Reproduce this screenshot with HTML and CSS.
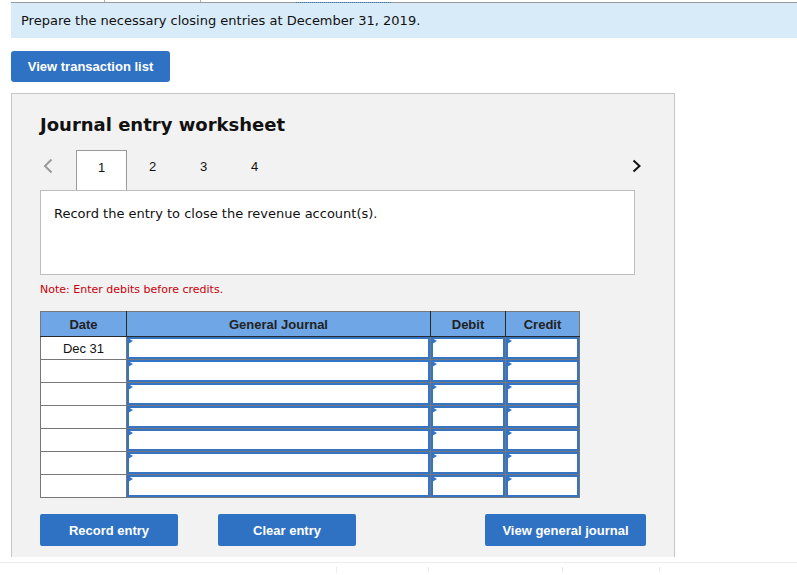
FILE: index.html
```html
<!DOCTYPE html>
<html>
<head>
<meta charset="utf-8">
<link rel="stylesheet" href="styles.css">
</head>
<body>
<div class="page">
  <div class="topbar">
    <span class="seg s1"></span>
    <span class="seg s2"></span>
    <span class="seg s3"></span>
    <span class="seg s4"></span>
    <span class="seg s5"></span>
  </div>
  <div class="banner">Prepare the necessary closing entries at December 31, 2019.</div>
  <button class="btn btn-list">View transaction list</button>
  <div class="panel">
    <h1 class="title">Journal entry worksheet</h1>
    <div class="tabs">
      <span class="arrow arrow-left">
        <svg width="10" height="16" viewBox="0 0 10 16"><path d="M8.5 1.5 L2 8 L8.5 14.5" fill="none" stroke="#9a9a9a" stroke-width="2"/></svg>
      </span>
      <span class="tab active">1</span>
      <span class="tab">2</span>
      <span class="tab">3</span>
      <span class="tab">4</span>
      <span class="arrow arrow-right">
        <svg width="10" height="14" viewBox="0 0 10 14"><path d="M1.5 1.5 L7.5 7 L1.5 12.5" fill="none" stroke="#111" stroke-width="2"/></svg>
      </span>
    </div>
    <div class="entrybox">Record the entry to close the revenue account(s).</div>
    <p class="note">Note: Enter debits before credits.</p>
    <table class="journal">
      <thead>
        <tr>
          <th class="c-date">Date</th>
          <th class="c-gj">General Journal</th>
          <th class="c-deb">Debit</th>
          <th class="c-cre">Credit</th>
        </tr>
      </thead>
      <tbody>
        <tr><td class="date">Dec 31</td><td class="inp"><div class="box"></div></td><td class="inp"><div class="box"></div></td><td class="inp"><div class="box"></div></td></tr>
        <tr><td class="date"></td><td class="inp"><div class="box"></div></td><td class="inp"><div class="box"></div></td><td class="inp"><div class="box"></div></td></tr>
        <tr><td class="date"></td><td class="inp"><div class="box"></div></td><td class="inp"><div class="box"></div></td><td class="inp"><div class="box"></div></td></tr>
        <tr><td class="date"></td><td class="inp"><div class="box"></div></td><td class="inp"><div class="box"></div></td><td class="inp"><div class="box"></div></td></tr>
        <tr><td class="date"></td><td class="inp"><div class="box"></div></td><td class="inp"><div class="box"></div></td><td class="inp"><div class="box"></div></td></tr>
        <tr><td class="date"></td><td class="inp"><div class="box"></div></td><td class="inp"><div class="box"></div></td><td class="inp"><div class="box"></div></td></tr>
        <tr><td class="date"></td><td class="inp"><div class="box"></div></td><td class="inp"><div class="box"></div></td><td class="inp"><div class="box"></div></td></tr>
      </tbody>
    </table>
    <div class="actions">
      <button class="btn btn-act">Record entry</button>
      <button class="btn btn-act btn-clear">Clear entry</button>
      <button class="btn btn-view">View general journal</button>
    </div>
  </div>
  <div class="footline">
    <span class="fseg f1"></span>
    <span class="fseg f2"></span>
    <span class="fseg f3"></span>
    <span class="fseg f4"></span>
  </div>
</div>
</body>
</html>
```
FILE: styles.css
```css
html, body {
  margin: 0;
  padding: 0;
  background: #fff;
}
.page {
  width: 797px;
  font-family: "DejaVu Sans", Verdana, sans-serif;
  color: #111;
}
.topbar {
  display: flex;
  height: 2px;
  margin-left: 11px;
  border-bottom: 1px solid #9a9a9a;
}
.seg { display: block; height: 2px; }
.s1 { width: 93px; border-right: 1px solid #b0b0b0; }
.s2 { width: 95px; border-right: 1px solid #b0b0b0; }
.s3 { width: 95px; }
.s4 { width: 95px; border-bottom: 1px dotted #3a78c8; height: 1px; margin-top: 1px; }
.s5 { flex: 1; }
.banner {
  margin-left: 11px;
  height: 35px;
  background: #d8ebf9;
  padding-left: 10px;
  font-size: 13px;
  line-height: 36px;
  color: #111;
}
.btn {
  display: block;
  border: 0;
  border-radius: 3px;
  background: #2f72c4;
  color: #fff;
  font-family: "Liberation Sans", Arial, sans-serif;
  font-weight: bold;
  font-size: 13px;
  padding: 0;
  cursor: pointer;
}
.btn-list {
  margin: 13px 0 0 11px;
  width: 159px;
  height: 31px;
}
.panel {
  margin: 11px 0 0 11px;
  width: 634px;
  height: 463px;
  background: #f2f2f2;
  border: 1px solid #c6c6c6;
  border-bottom: 0;
  padding-left: 28px;
}
.title {
  margin: 20px 0 0 0;
  font-size: 18px;
  font-weight: bold;
  line-height: 22px;
  color: #111;
}
.tabs {
  display: flex;
  align-items: flex-start;
  width: 602px;
  margin-top: 14px;
  height: 40px;
  font-family: "Liberation Sans", Arial, sans-serif;
  font-size: 13px;
}
.arrow { display: flex; align-items: center; }
.arrow-left { width: 36px; height: 31px; padding-left: 3px; box-sizing: border-box; }
.arrow-right { margin-left: auto; height: 31px; }
.tab {
  width: 51px;
  box-sizing: border-box;
  height: 40px;
  text-align: center;
  padding-top: 9px;
  line-height: 15px;
  color: #111;
}
.tab.active {
  background: #fff;
  border: 1px solid #9a9a9a;
  border-bottom: 0;
  position: relative;
  z-index: 1;
}
.entrybox {
  width: 595px;
  height: 85px;
  box-sizing: border-box;
  background: #fff;
  border: 1px solid #bdbdbd;
  padding: 15px 0 0 13px;
  font-size: 13px;
  line-height: 16px;
  color: #111;
}
.note {
  margin: 8px 0 0 0;
  font-size: 11px;
  line-height: 14px;
  color: #c8000a;
}
.journal {
  margin-top: 14px;
  border-collapse: collapse;
  table-layout: fixed;
  width: 539px;
  font-family: "Liberation Sans", Arial, sans-serif;
  font-size: 13px;
}
.journal th {
  background: #6ea6e6;
  height: 24px;
  padding: 0;
  font-weight: bold;
  color: #222;
  border: 1px solid #2a2a2a;
  border-top-color: #777;
}
.journal th.c-date { border-left-color: #777; }
.journal th.c-cre { border-right-color: #777; }
.c-date { width: 85px; }
.c-gj { width: 303px; }
.c-deb { width: 74px; }
.c-cre { width: 73px; }
.journal td {
  border: 1px solid #777;
  height: 22px;
  padding: 0;
  background: #fff;
}
.journal td.date {
  text-align: center;
  color: #111;
}
.journal td.inp {
  position: relative;
}
.box {
  height: 22px;
  box-sizing: border-box;
  border: 2px solid #3474c6;
  background: #fff;
}
.box::before {
  content: "";
  position: absolute;
  left: 1px;
  top: 1px;
  width: 0;
  height: 0;
  border-left: 5px solid #3474c6;
  border-top: 3px solid transparent;
  border-bottom: 3px solid transparent;
}
.actions {
  display: flex;
  width: 606px;
  margin-top: 16px;
}
.btn-act {
  width: 138px;
  height: 32px;
  border-radius: 2px;
}
.btn-clear { margin-left: 40px; }
.btn-view {
  margin-left: auto;
  width: 161px;
  height: 32px;
  border-radius: 2px;
}
.footline {
  display: flex;
  margin-top: 5px;
  height: 10px;
  border-top: 1px solid #ececec;
}
.fseg { display: block; height: 6px; margin-top: 4px; }
.f1 { width: 336px; border-right: 1px solid #ececec; }
.f2 { width: 91px; border-right: 1px solid #ececec; }
.f3 { width: 133px; border-right: 1px solid #ececec; }
.f4 { width: 96px; border-right: 1px solid #ececec; }
```
